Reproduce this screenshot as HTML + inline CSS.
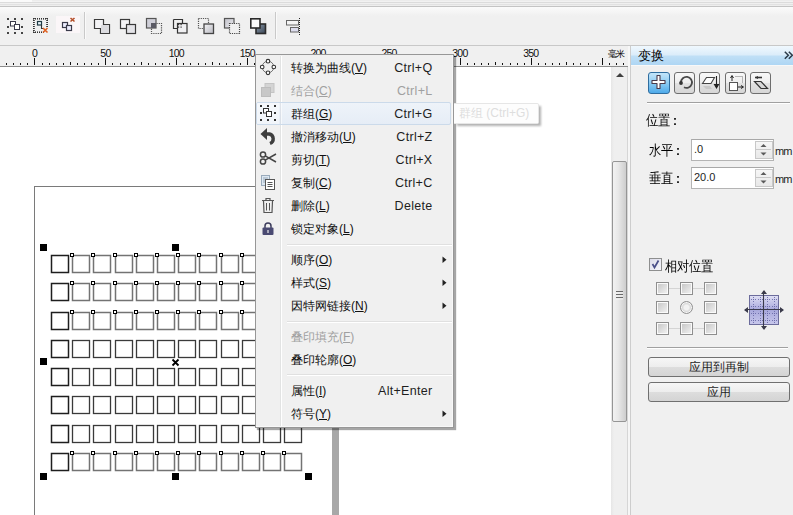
<!DOCTYPE html><html><head><meta charset="utf-8"><style>
*{margin:0;padding:0;box-sizing:border-box}
html,body{width:793px;height:515px;overflow:hidden;background:#fff;font-family:"Liberation Sans",sans-serif;color:#1e1e1e}
.a{position:absolute}
svg{position:absolute;overflow:visible}
.rl{position:absolute;font-size:10.5px;color:#111;top:48px;line-height:10px;width:30px;text-align:center;letter-spacing:-0.8px}
.mi{position:absolute;left:291px;font-size:12px;font-weight:500;line-height:14px;white-space:nowrap;color:#111}
.sc{position:absolute;font-size:12.5px;letter-spacing:0.3px;line-height:14px;white-space:nowrap;color:#1e1e1e}
.dis{color:#a0a0a0}
u{text-decoration:underline;text-underline-offset:1px}
.pt.cj{font-size:12px;letter-spacing:0;color:#000;transform:scaleY(1.14);transform-origin:0 0}
.pt .co{font-size:12px;margin-left:3px;font-weight:700;letter-spacing:0}
.pt{position:absolute;font-size:12px;font-weight:500;line-height:14px;white-space:nowrap;color:#1e1e1e}
</style></head><body><div class="a" style="left:0px;top:0px;width:793px;height:6px;background:linear-gradient(#ececec 0,#ececec 1px,#f2f2f2 1px,#f2f2f2 2px,#dcdcdc 2px,#dcdcdc 3px,#f0f0f0 3px,#f0f0f0 4px,#e2e2e2 4px,#e2e2e2 5px,#eeeeee 5px)"></div><div class="a" style="left:0px;top:0px;width:32px;height:2px;background:#fafafa"></div><div class="a" style="left:0px;top:6px;width:793px;height:1px;background:#c4c4c4"></div><div class="a" style="left:0px;top:7px;width:793px;height:38px;background:linear-gradient(#fbfbfb,#f0f0f0 9px,#f0f0f0)"></div><div class="a" style="left:0px;top:45px;width:793px;height:1px;background:#c8c8c8"></div><div class="a" style="left:84px;top:12px;width:1px;height:27px;background:#c9c9c9"></div><div class="a" style="left:85px;top:12px;width:1px;height:27px;background:#fafafa"></div><div class="a" style="left:275px;top:12px;width:1px;height:27px;background:#c9c9c9"></div><div class="a" style="left:276px;top:12px;width:1px;height:27px;background:#fafafa"></div><svg style="left:7px;top:18px" width="16" height="16" viewBox="0 0 16 16"><rect x="0" y="0" width="2" height="2" fill="#444"/><rect x="7" y="0" width="2" height="2" fill="#444"/><rect x="14" y="0" width="2" height="2" fill="#444"/><rect x="0" y="8" width="2" height="2" fill="#444"/><rect x="14" y="8" width="2" height="2" fill="#444"/><rect x="0" y="14" width="2" height="2" fill="#444"/><rect x="7" y="14" width="2" height="2" fill="#444"/><rect x="14" y="14" width="2" height="2" fill="#444"/><rect x="3.5" y="3.5" width="5" height="4.5" fill="#fff" stroke="#3a3a4a"/><rect x="7.5" y="6.5" width="5" height="5" fill="#fff" stroke="#3a3a4a"/></svg><svg style="left:33px;top:18px" width="16" height="16" viewBox="0 0 16 16"><rect x="0" y="0" width="1" height="1.6" fill="#333"/><rect x="2" y="0" width="1" height="1.6" fill="#333"/><rect x="4" y="0" width="1" height="1.6" fill="#333"/><rect x="6" y="0" width="1" height="1.6" fill="#333"/><rect x="8" y="0" width="1" height="1.6" fill="#333"/><rect x="10" y="0" width="1" height="1.6" fill="#333"/><rect x="12" y="0" width="1" height="1.6" fill="#333"/><rect x="14" y="0" width="1" height="1.6" fill="#333"/><rect x="0" y="13.4" width="1" height="1.6" fill="#333"/><rect x="2" y="13.4" width="1" height="1.6" fill="#333"/><rect x="4" y="13.4" width="1" height="1.6" fill="#333"/><rect x="6" y="13.4" width="1" height="1.6" fill="#333"/><rect x="8" y="13.4" width="1" height="1.6" fill="#333"/><rect x="10" y="13.4" width="1" height="1.6" fill="#333"/><rect x="0" y="0" width="1.8" height="1" fill="#333"/><rect x="0" y="2" width="1.8" height="1" fill="#333"/><rect x="0" y="4" width="1.8" height="1" fill="#333"/><rect x="0" y="6" width="1.8" height="1" fill="#333"/><rect x="0" y="8" width="1.8" height="1" fill="#333"/><rect x="0" y="10" width="1.8" height="1" fill="#333"/><rect x="0" y="12" width="1.8" height="1" fill="#333"/><rect x="0" y="14" width="1.8" height="1" fill="#333"/><rect x="13.2" y="0" width="1.8" height="1" fill="#333"/><rect x="13.2" y="2" width="1.8" height="1" fill="#333"/><rect x="13.2" y="4" width="1.8" height="1" fill="#333"/><rect x="13.2" y="6" width="1.8" height="1" fill="#333"/><rect x="13.2" y="8" width="1.8" height="1" fill="#333"/><rect x="4.5" y="3.5" width="4" height="3.5" fill="#e8f6fa" stroke="#1f3a44" stroke-width="1.2"/><path d="M8.5 7 V10.5 H11" stroke="#333" fill="none" stroke-width="1.1"/><path d="M10 10 L14.5 14.5 M14.5 10 L10 14.5" stroke="#e06020" stroke-width="1.6"/></svg><svg style="left:56px;top:16px" width="24" height="18" viewBox="0 0 24 18"><rect x="0" y="0" width="24" height="17" fill="#fbf6f8"/><rect x="6.5" y="6.5" width="5" height="5" fill="#eef" stroke="#3a3a4a" stroke-width="1.2"/><rect x="10.5" y="9.5" width="5" height="5" fill="#eef" stroke="#3a3a4a" stroke-width="1.2"/><path d="M14.5 2 L18.5 5.5 M18.5 2 L14.5 5.5" stroke="#b5502a" stroke-width="1.6"/></svg><svg style="left:94px;top:19px" width="17" height="15" viewBox="0 0 17 15"><path d="M0.5 0.5 H9.5 V5.5 H15.5 V14.5 H6.5 V9.5 H0.5 Z" fill="#f4f4f6" stroke="#3a3a3a" stroke-width="1.2"/><rect x="7" y="6" width="8" height="8" fill="#dcdce0"/></svg><svg style="left:120px;top:19px" width="17" height="15" viewBox="0 0 17 15"><rect x="0.5" y="0.5" width="9" height="9" fill="#f4f4f6" stroke="#3a3a3a" stroke-width="1.2"/><rect x="6.5" y="5.5" width="9" height="9" fill="#e4e4e8" stroke="#3a3a3a" stroke-width="1.2"/></svg><svg style="left:146px;top:18px" width="17" height="16" viewBox="0 0 17 16"><rect x="0.5" y="0.5" width="9.5" height="9.5" fill="#cfcfd8" stroke="#555" stroke-width="1.2"/><rect x="5" y="5" width="5" height="5" fill="#5a5a64"/><path d="M10.5 5.5 H15.5 V15.5 H5.5 V10.5" fill="none" stroke="#555" stroke-width="1.2" stroke-dasharray="1.2 1"/></svg><svg style="left:173px;top:19px" width="15" height="15" viewBox="0 0 15 15"><path d="M0.5 0.5 H9.5 V4" fill="none" stroke="#333" stroke-width="1.2"/><path d="M0.5 0.5 V9.5 H4" fill="none" stroke="#333" stroke-width="1.2"/><rect x="4.5" y="4.5" width="9.5" height="9.5" fill="#f0f0f2" stroke="#333" stroke-width="1.2"/><g fill="#333"><rect x="5" y="5" width="1.2" height="1.2"/><rect x="7.5" y="5" width="1.2" height="1.2"/><rect x="5" y="7.5" width="1.2" height="1.2"/><rect x="7.5" y="7.5" width="1.2" height="1.2"/></g></svg><svg style="left:198px;top:18px" width="17" height="16" viewBox="0 0 17 16"><path d="M0.5 0.5 H10.5 V5.5 M0.5 0.5 V10.5 H5.5" fill="none" stroke="#555" stroke-width="1.2" stroke-dasharray="1.2 1"/><defs><linearGradient id="g8" x1="0" y1="0" x2="1" y2="1"><stop offset="0" stop-color="#f4f4f6"/><stop offset="1" stop-color="#b8b8c0"/></linearGradient></defs><rect x="6" y="6" width="9.5" height="9.5" fill="url(#g8)" stroke="#444" stroke-width="1.3"/></svg><svg style="left:224px;top:18px" width="17" height="16" viewBox="0 0 17 16"><defs><linearGradient id="g9" x1="0" y1="0" x2="1" y2="1"><stop offset="0" stop-color="#c0c0c8"/><stop offset="1" stop-color="#eeeef2"/></linearGradient></defs><rect x="0.5" y="0.5" width="9.5" height="9.5" fill="url(#g9)" stroke="#555" stroke-width="1.2"/><rect x="5.5" y="5.5" width="10" height="10" fill="#f0f0f0" stroke="#444" stroke-width="1.2" stroke-dasharray="1.2 1"/></svg><svg style="left:250px;top:18px" width="17" height="16" viewBox="0 0 17 16"><defs><linearGradient id="g10" x1="0" y1="0" x2="1" y2="1"><stop offset="0" stop-color="#8a98a8"/><stop offset="1" stop-color="#3a4656"/></linearGradient></defs><rect x="6" y="6" width="9.5" height="9.5" fill="url(#g10)" stroke="#2a2a2a" stroke-width="1.6"/><rect x="0.8" y="0.8" width="9.2" height="9.2" fill="#fafafa" stroke="#2a2a2a" stroke-width="1.6"/></svg><svg style="left:286px;top:18px" width="15" height="17" viewBox="0 0 15 17"><rect x="0.5" y="2.5" width="12" height="4.5" fill="#f4f4f4" stroke="#666"/><rect x="4.5" y="9.5" width="8" height="4.5" fill="#dde" stroke="#666"/><path d="M13.5 0 V17" stroke="#222" stroke-dasharray="1 1"/></svg><div class="a" style="left:0px;top:46px;width:628px;height:20px;background:#f0f0f0"></div><div class="a" style="left:628px;top:46px;width:2px;height:21px;background:#f7f7f7"></div><div class="a" style="left:0px;top:66px;width:628px;height:1px;background:#8c8c8c"></div><svg style="left:0px;top:0px" width="630" height="67" viewBox="0 0 630 67"><rect x="6" y="63" width="1" height="2" fill="#111"/><rect x="13" y="63" width="1" height="2" fill="#111"/><rect x="20" y="63" width="1" height="2" fill="#111"/><rect x="27" y="63" width="1" height="2" fill="#111"/><rect x="34" y="58" width="1" height="7" fill="#111"/><rect x="42" y="63" width="1" height="2" fill="#111"/><rect x="49" y="63" width="1" height="2" fill="#111"/><rect x="56" y="63" width="1" height="2" fill="#111"/><rect x="63" y="63" width="1" height="2" fill="#111"/><rect x="70" y="62" width="1" height="3" fill="#111"/><rect x="77" y="63" width="1" height="2" fill="#111"/><rect x="84" y="63" width="1" height="2" fill="#111"/><rect x="91" y="63" width="1" height="2" fill="#111"/><rect x="98" y="63" width="1" height="2" fill="#111"/><rect x="105" y="58" width="1" height="7" fill="#111"/><rect x="112" y="63" width="1" height="2" fill="#111"/><rect x="120" y="63" width="1" height="2" fill="#111"/><rect x="127" y="63" width="1" height="2" fill="#111"/><rect x="134" y="63" width="1" height="2" fill="#111"/><rect x="141" y="62" width="1" height="3" fill="#111"/><rect x="148" y="63" width="1" height="2" fill="#111"/><rect x="155" y="63" width="1" height="2" fill="#111"/><rect x="162" y="63" width="1" height="2" fill="#111"/><rect x="169" y="63" width="1" height="2" fill="#111"/><rect x="176" y="58" width="1" height="7" fill="#111"/><rect x="183" y="63" width="1" height="2" fill="#111"/><rect x="190" y="63" width="1" height="2" fill="#111"/><rect x="198" y="63" width="1" height="2" fill="#111"/><rect x="205" y="63" width="1" height="2" fill="#111"/><rect x="212" y="62" width="1" height="3" fill="#111"/><rect x="219" y="63" width="1" height="2" fill="#111"/><rect x="226" y="63" width="1" height="2" fill="#111"/><rect x="233" y="63" width="1" height="2" fill="#111"/><rect x="240" y="63" width="1" height="2" fill="#111"/><rect x="247" y="58" width="1" height="7" fill="#111"/><rect x="254" y="63" width="1" height="2" fill="#111"/><rect x="261" y="63" width="1" height="2" fill="#111"/><rect x="268" y="63" width="1" height="2" fill="#111"/><rect x="276" y="63" width="1" height="2" fill="#111"/><rect x="283" y="62" width="1" height="3" fill="#111"/><rect x="290" y="63" width="1" height="2" fill="#111"/><rect x="297" y="63" width="1" height="2" fill="#111"/><rect x="304" y="63" width="1" height="2" fill="#111"/><rect x="311" y="63" width="1" height="2" fill="#111"/><rect x="318" y="58" width="1" height="7" fill="#111"/><rect x="325" y="63" width="1" height="2" fill="#111"/><rect x="332" y="63" width="1" height="2" fill="#111"/><rect x="339" y="63" width="1" height="2" fill="#111"/><rect x="346" y="63" width="1" height="2" fill="#111"/><rect x="354" y="62" width="1" height="3" fill="#111"/><rect x="361" y="63" width="1" height="2" fill="#111"/><rect x="368" y="63" width="1" height="2" fill="#111"/><rect x="375" y="63" width="1" height="2" fill="#111"/><rect x="382" y="63" width="1" height="2" fill="#111"/><rect x="389" y="58" width="1" height="7" fill="#111"/><rect x="396" y="63" width="1" height="2" fill="#111"/><rect x="403" y="63" width="1" height="2" fill="#111"/><rect x="410" y="63" width="1" height="2" fill="#111"/><rect x="417" y="63" width="1" height="2" fill="#111"/><rect x="424" y="62" width="1" height="3" fill="#111"/><rect x="432" y="63" width="1" height="2" fill="#111"/><rect x="439" y="63" width="1" height="2" fill="#111"/><rect x="446" y="63" width="1" height="2" fill="#111"/><rect x="453" y="63" width="1" height="2" fill="#111"/><rect x="460" y="58" width="1" height="7" fill="#111"/><rect x="467" y="63" width="1" height="2" fill="#111"/><rect x="474" y="63" width="1" height="2" fill="#111"/><rect x="481" y="63" width="1" height="2" fill="#111"/><rect x="488" y="63" width="1" height="2" fill="#111"/><rect x="495" y="62" width="1" height="3" fill="#111"/><rect x="502" y="63" width="1" height="2" fill="#111"/><rect x="510" y="63" width="1" height="2" fill="#111"/><rect x="517" y="63" width="1" height="2" fill="#111"/><rect x="524" y="63" width="1" height="2" fill="#111"/><rect x="531" y="58" width="1" height="7" fill="#111"/><rect x="538" y="63" width="1" height="2" fill="#111"/><rect x="545" y="63" width="1" height="2" fill="#111"/><rect x="552" y="63" width="1" height="2" fill="#111"/><rect x="559" y="63" width="1" height="2" fill="#111"/><rect x="566" y="62" width="1" height="3" fill="#111"/><rect x="573" y="63" width="1" height="2" fill="#111"/><rect x="580" y="63" width="1" height="2" fill="#111"/><rect x="588" y="63" width="1" height="2" fill="#111"/><rect x="595" y="63" width="1" height="2" fill="#111"/><rect x="602" y="58" width="1" height="7" fill="#111"/><rect x="609" y="63" width="1" height="2" fill="#111"/><rect x="616" y="63" width="1" height="2" fill="#111"/><rect x="623" y="63" width="1" height="2" fill="#111"/></svg><div class="rl" style="left:19.5px">0</div><div class="rl" style="left:90.4px">50</div><div class="rl" style="left:161.3px">100</div><div class="rl" style="left:232.2px">150</div><div class="rl" style="left:303.1px">200</div><div class="rl" style="left:374.0px">250</div><div class="rl" style="left:444.9px">300</div><div class="rl" style="left:515.8px">350</div><div class="rl" style="left:608px;width:18px;text-align:left;font-size:9px;top:49px;font-weight:500;color:#000">毫米</div><div class="a" style="left:0px;top:67px;width:611px;height:448px;background:#fff"></div><div class="a" style="left:34px;top:186px;width:299px;height:329px;border-left:1px solid #7a7a7a;border-top:1px solid #7a7a7a"></div><div class="a" style="left:332px;top:192px;width:7px;height:323px;background:#a8a8a8"></div><svg style="left:0px;top:0px" width="611" height="515" viewBox="0 0 611 515"><rect x="51.5" y="255.5" width="17" height="17" fill="none" stroke="#1e1e1e" stroke-width="1.5"/><rect x="72.5" y="255.5" width="17" height="17" fill="none" stroke="#737373" stroke-width="1.5"/><rect x="70.5" y="253.5" width="3" height="3" fill="#fff" stroke="#000" stroke-width="1"/><rect x="93.5" y="255.5" width="17" height="17" fill="none" stroke="#737373" stroke-width="1.5"/><rect x="91.5" y="253.5" width="3" height="3" fill="#fff" stroke="#000" stroke-width="1"/><rect x="115.5" y="255.5" width="17" height="17" fill="none" stroke="#737373" stroke-width="1.5"/><rect x="113.5" y="253.5" width="3" height="3" fill="#fff" stroke="#000" stroke-width="1"/><rect x="136.5" y="255.5" width="17" height="17" fill="none" stroke="#737373" stroke-width="1.5"/><rect x="134.5" y="253.5" width="3" height="3" fill="#fff" stroke="#000" stroke-width="1"/><rect x="157.5" y="255.5" width="17" height="17" fill="none" stroke="#737373" stroke-width="1.5"/><rect x="155.5" y="253.5" width="3" height="3" fill="#fff" stroke="#000" stroke-width="1"/><rect x="178.5" y="255.5" width="17" height="17" fill="none" stroke="#737373" stroke-width="1.5"/><rect x="176.5" y="253.5" width="3" height="3" fill="#fff" stroke="#000" stroke-width="1"/><rect x="199.5" y="255.5" width="17" height="17" fill="none" stroke="#737373" stroke-width="1.5"/><rect x="197.5" y="253.5" width="3" height="3" fill="#fff" stroke="#000" stroke-width="1"/><rect x="221.5" y="255.5" width="17" height="17" fill="none" stroke="#737373" stroke-width="1.5"/><rect x="219.5" y="253.5" width="3" height="3" fill="#fff" stroke="#000" stroke-width="1"/><rect x="242.5" y="255.5" width="17" height="17" fill="none" stroke="#737373" stroke-width="1.5"/><rect x="240.5" y="253.5" width="3" height="3" fill="#fff" stroke="#000" stroke-width="1"/><rect x="263.5" y="255.5" width="17" height="17" fill="none" stroke="#737373" stroke-width="1.5"/><rect x="261.5" y="253.5" width="3" height="3" fill="#fff" stroke="#000" stroke-width="1"/><rect x="284.5" y="255.5" width="17" height="17" fill="none" stroke="#737373" stroke-width="1.5"/><rect x="282.5" y="253.5" width="3" height="3" fill="#fff" stroke="#000" stroke-width="1"/><rect x="51.5" y="283.5" width="17" height="17" fill="none" stroke="#1e1e1e" stroke-width="1.5"/><rect x="72.5" y="283.5" width="17" height="17" fill="none" stroke="#737373" stroke-width="1.5"/><rect x="70.5" y="281.5" width="3" height="3" fill="#fff" stroke="#000" stroke-width="1"/><rect x="93.5" y="283.5" width="17" height="17" fill="none" stroke="#737373" stroke-width="1.5"/><rect x="91.5" y="281.5" width="3" height="3" fill="#fff" stroke="#000" stroke-width="1"/><rect x="115.5" y="283.5" width="17" height="17" fill="none" stroke="#737373" stroke-width="1.5"/><rect x="113.5" y="281.5" width="3" height="3" fill="#fff" stroke="#000" stroke-width="1"/><rect x="136.5" y="283.5" width="17" height="17" fill="none" stroke="#737373" stroke-width="1.5"/><rect x="134.5" y="281.5" width="3" height="3" fill="#fff" stroke="#000" stroke-width="1"/><rect x="157.5" y="283.5" width="17" height="17" fill="none" stroke="#737373" stroke-width="1.5"/><rect x="155.5" y="281.5" width="3" height="3" fill="#fff" stroke="#000" stroke-width="1"/><rect x="178.5" y="283.5" width="17" height="17" fill="none" stroke="#737373" stroke-width="1.5"/><rect x="176.5" y="281.5" width="3" height="3" fill="#fff" stroke="#000" stroke-width="1"/><rect x="199.5" y="283.5" width="17" height="17" fill="none" stroke="#737373" stroke-width="1.5"/><rect x="197.5" y="281.5" width="3" height="3" fill="#fff" stroke="#000" stroke-width="1"/><rect x="221.5" y="283.5" width="17" height="17" fill="none" stroke="#737373" stroke-width="1.5"/><rect x="219.5" y="281.5" width="3" height="3" fill="#fff" stroke="#000" stroke-width="1"/><rect x="242.5" y="283.5" width="17" height="17" fill="none" stroke="#737373" stroke-width="1.5"/><rect x="240.5" y="281.5" width="3" height="3" fill="#fff" stroke="#000" stroke-width="1"/><rect x="263.5" y="283.5" width="17" height="17" fill="none" stroke="#737373" stroke-width="1.5"/><rect x="261.5" y="281.5" width="3" height="3" fill="#fff" stroke="#000" stroke-width="1"/><rect x="284.5" y="283.5" width="17" height="17" fill="none" stroke="#737373" stroke-width="1.5"/><rect x="282.5" y="281.5" width="3" height="3" fill="#fff" stroke="#000" stroke-width="1"/><rect x="51.5" y="312.5" width="17" height="17" fill="none" stroke="#1e1e1e" stroke-width="1.5"/><rect x="72.5" y="312.5" width="17" height="17" fill="none" stroke="#737373" stroke-width="1.5"/><rect x="70.5" y="310.5" width="3" height="3" fill="#fff" stroke="#000" stroke-width="1"/><rect x="93.5" y="312.5" width="17" height="17" fill="none" stroke="#737373" stroke-width="1.5"/><rect x="91.5" y="310.5" width="3" height="3" fill="#fff" stroke="#000" stroke-width="1"/><rect x="115.5" y="312.5" width="17" height="17" fill="none" stroke="#737373" stroke-width="1.5"/><rect x="113.5" y="310.5" width="3" height="3" fill="#fff" stroke="#000" stroke-width="1"/><rect x="136.5" y="312.5" width="17" height="17" fill="none" stroke="#737373" stroke-width="1.5"/><rect x="134.5" y="310.5" width="3" height="3" fill="#fff" stroke="#000" stroke-width="1"/><rect x="157.5" y="312.5" width="17" height="17" fill="none" stroke="#737373" stroke-width="1.5"/><rect x="155.5" y="310.5" width="3" height="3" fill="#fff" stroke="#000" stroke-width="1"/><rect x="178.5" y="312.5" width="17" height="17" fill="none" stroke="#737373" stroke-width="1.5"/><rect x="176.5" y="310.5" width="3" height="3" fill="#fff" stroke="#000" stroke-width="1"/><rect x="199.5" y="312.5" width="17" height="17" fill="none" stroke="#737373" stroke-width="1.5"/><rect x="197.5" y="310.5" width="3" height="3" fill="#fff" stroke="#000" stroke-width="1"/><rect x="221.5" y="312.5" width="17" height="17" fill="none" stroke="#737373" stroke-width="1.5"/><rect x="219.5" y="310.5" width="3" height="3" fill="#fff" stroke="#000" stroke-width="1"/><rect x="242.5" y="312.5" width="17" height="17" fill="none" stroke="#737373" stroke-width="1.5"/><rect x="240.5" y="310.5" width="3" height="3" fill="#fff" stroke="#000" stroke-width="1"/><rect x="263.5" y="312.5" width="17" height="17" fill="none" stroke="#737373" stroke-width="1.5"/><rect x="261.5" y="310.5" width="3" height="3" fill="#fff" stroke="#000" stroke-width="1"/><rect x="284.5" y="312.5" width="17" height="17" fill="none" stroke="#737373" stroke-width="1.5"/><rect x="282.5" y="310.5" width="3" height="3" fill="#fff" stroke="#000" stroke-width="1"/><rect x="51.5" y="340.5" width="17" height="17" fill="none" stroke="#1e1e1e" stroke-width="1.5"/><rect x="72.5" y="340.5" width="17" height="17" fill="none" stroke="#3a3a3a" stroke-width="1.3"/><rect x="93.5" y="340.5" width="17" height="17" fill="none" stroke="#3a3a3a" stroke-width="1.3"/><rect x="115.5" y="340.5" width="17" height="17" fill="none" stroke="#3a3a3a" stroke-width="1.3"/><rect x="136.5" y="340.5" width="17" height="17" fill="none" stroke="#3a3a3a" stroke-width="1.3"/><rect x="157.5" y="340.5" width="17" height="17" fill="none" stroke="#3a3a3a" stroke-width="1.3"/><rect x="178.5" y="340.5" width="17" height="17" fill="none" stroke="#3a3a3a" stroke-width="1.3"/><rect x="199.5" y="340.5" width="17" height="17" fill="none" stroke="#3a3a3a" stroke-width="1.3"/><rect x="221.5" y="340.5" width="17" height="17" fill="none" stroke="#3a3a3a" stroke-width="1.3"/><rect x="242.5" y="340.5" width="17" height="17" fill="none" stroke="#3a3a3a" stroke-width="1.3"/><rect x="263.5" y="340.5" width="17" height="17" fill="none" stroke="#3a3a3a" stroke-width="1.3"/><rect x="284.5" y="340.5" width="17" height="17" fill="none" stroke="#3a3a3a" stroke-width="1.3"/><rect x="51.5" y="368.5" width="17" height="17" fill="none" stroke="#1e1e1e" stroke-width="1.5"/><rect x="72.5" y="368.5" width="17" height="17" fill="none" stroke="#3a3a3a" stroke-width="1.3"/><rect x="93.5" y="368.5" width="17" height="17" fill="none" stroke="#3a3a3a" stroke-width="1.3"/><rect x="115.5" y="368.5" width="17" height="17" fill="none" stroke="#3a3a3a" stroke-width="1.3"/><rect x="136.5" y="368.5" width="17" height="17" fill="none" stroke="#3a3a3a" stroke-width="1.3"/><rect x="157.5" y="368.5" width="17" height="17" fill="none" stroke="#3a3a3a" stroke-width="1.3"/><rect x="178.5" y="368.5" width="17" height="17" fill="none" stroke="#3a3a3a" stroke-width="1.3"/><rect x="199.5" y="368.5" width="17" height="17" fill="none" stroke="#3a3a3a" stroke-width="1.3"/><rect x="221.5" y="368.5" width="17" height="17" fill="none" stroke="#3a3a3a" stroke-width="1.3"/><rect x="242.5" y="368.5" width="17" height="17" fill="none" stroke="#3a3a3a" stroke-width="1.3"/><rect x="263.5" y="368.5" width="17" height="17" fill="none" stroke="#3a3a3a" stroke-width="1.3"/><rect x="284.5" y="368.5" width="17" height="17" fill="none" stroke="#3a3a3a" stroke-width="1.3"/><rect x="51.5" y="396.5" width="17" height="17" fill="none" stroke="#1e1e1e" stroke-width="1.5"/><rect x="72.5" y="396.5" width="17" height="17" fill="none" stroke="#3a3a3a" stroke-width="1.3"/><rect x="93.5" y="396.5" width="17" height="17" fill="none" stroke="#3a3a3a" stroke-width="1.3"/><rect x="115.5" y="396.5" width="17" height="17" fill="none" stroke="#3a3a3a" stroke-width="1.3"/><rect x="136.5" y="396.5" width="17" height="17" fill="none" stroke="#3a3a3a" stroke-width="1.3"/><rect x="157.5" y="396.5" width="17" height="17" fill="none" stroke="#3a3a3a" stroke-width="1.3"/><rect x="178.5" y="396.5" width="17" height="17" fill="none" stroke="#3a3a3a" stroke-width="1.3"/><rect x="199.5" y="396.5" width="17" height="17" fill="none" stroke="#3a3a3a" stroke-width="1.3"/><rect x="221.5" y="396.5" width="17" height="17" fill="none" stroke="#3a3a3a" stroke-width="1.3"/><rect x="242.5" y="396.5" width="17" height="17" fill="none" stroke="#3a3a3a" stroke-width="1.3"/><rect x="263.5" y="396.5" width="17" height="17" fill="none" stroke="#3a3a3a" stroke-width="1.3"/><rect x="284.5" y="396.5" width="17" height="17" fill="none" stroke="#3a3a3a" stroke-width="1.3"/><rect x="51.5" y="425.5" width="17" height="17" fill="none" stroke="#1e1e1e" stroke-width="1.5"/><rect x="72.5" y="425.5" width="17" height="17" fill="none" stroke="#3a3a3a" stroke-width="1.3"/><rect x="93.5" y="425.5" width="17" height="17" fill="none" stroke="#3a3a3a" stroke-width="1.3"/><rect x="115.5" y="425.5" width="17" height="17" fill="none" stroke="#3a3a3a" stroke-width="1.3"/><rect x="136.5" y="425.5" width="17" height="17" fill="none" stroke="#3a3a3a" stroke-width="1.3"/><rect x="157.5" y="425.5" width="17" height="17" fill="none" stroke="#3a3a3a" stroke-width="1.3"/><rect x="178.5" y="425.5" width="17" height="17" fill="none" stroke="#3a3a3a" stroke-width="1.3"/><rect x="199.5" y="425.5" width="17" height="17" fill="none" stroke="#3a3a3a" stroke-width="1.3"/><rect x="221.5" y="425.5" width="17" height="17" fill="none" stroke="#3a3a3a" stroke-width="1.3"/><rect x="242.5" y="425.5" width="17" height="17" fill="none" stroke="#3a3a3a" stroke-width="1.3"/><rect x="263.5" y="425.5" width="17" height="17" fill="none" stroke="#3a3a3a" stroke-width="1.3"/><rect x="284.5" y="425.5" width="17" height="17" fill="none" stroke="#3a3a3a" stroke-width="1.3"/><rect x="51.5" y="453.5" width="17" height="17" fill="none" stroke="#1e1e1e" stroke-width="1.5"/><rect x="72.5" y="453.5" width="17" height="17" fill="none" stroke="#737373" stroke-width="1.5"/><rect x="70.5" y="451.5" width="3" height="3" fill="#fff" stroke="#000" stroke-width="1"/><rect x="93.5" y="453.5" width="17" height="17" fill="none" stroke="#737373" stroke-width="1.5"/><rect x="91.5" y="451.5" width="3" height="3" fill="#fff" stroke="#000" stroke-width="1"/><rect x="115.5" y="453.5" width="17" height="17" fill="none" stroke="#737373" stroke-width="1.5"/><rect x="113.5" y="451.5" width="3" height="3" fill="#fff" stroke="#000" stroke-width="1"/><rect x="136.5" y="453.5" width="17" height="17" fill="none" stroke="#737373" stroke-width="1.5"/><rect x="134.5" y="451.5" width="3" height="3" fill="#fff" stroke="#000" stroke-width="1"/><rect x="157.5" y="453.5" width="17" height="17" fill="none" stroke="#737373" stroke-width="1.5"/><rect x="155.5" y="451.5" width="3" height="3" fill="#fff" stroke="#000" stroke-width="1"/><rect x="178.5" y="453.5" width="17" height="17" fill="none" stroke="#737373" stroke-width="1.5"/><rect x="176.5" y="451.5" width="3" height="3" fill="#fff" stroke="#000" stroke-width="1"/><rect x="199.5" y="453.5" width="17" height="17" fill="none" stroke="#737373" stroke-width="1.5"/><rect x="197.5" y="451.5" width="3" height="3" fill="#fff" stroke="#000" stroke-width="1"/><rect x="221.5" y="453.5" width="17" height="17" fill="none" stroke="#737373" stroke-width="1.5"/><rect x="219.5" y="451.5" width="3" height="3" fill="#fff" stroke="#000" stroke-width="1"/><rect x="242.5" y="453.5" width="17" height="17" fill="none" stroke="#737373" stroke-width="1.5"/><rect x="240.5" y="451.5" width="3" height="3" fill="#fff" stroke="#000" stroke-width="1"/><rect x="263.5" y="453.5" width="17" height="17" fill="none" stroke="#737373" stroke-width="1.5"/><rect x="261.5" y="451.5" width="3" height="3" fill="#fff" stroke="#000" stroke-width="1"/><rect x="284.5" y="453.5" width="17" height="17" fill="none" stroke="#737373" stroke-width="1.5"/><rect x="282.5" y="451.5" width="3" height="3" fill="#fff" stroke="#000" stroke-width="1"/><rect x="40" y="244" width="7" height="7" fill="#000"/><rect x="172" y="244" width="7" height="7" fill="#000"/><rect x="305" y="244" width="7" height="7" fill="#000"/><rect x="40" y="358" width="7" height="7" fill="#000"/><rect x="305" y="358" width="7" height="7" fill="#000"/><rect x="40" y="473" width="7" height="7" fill="#000"/><rect x="172" y="473" width="7" height="7" fill="#000"/><rect x="305" y="473" width="7" height="7" fill="#000"/><path d="M172.5 359.5 L178.5 365.5 M178.5 359.5 L172.5 365.5" stroke="#000" stroke-width="1.8"/></svg><div class="a" style="left:611px;top:67px;width:19px;height:448px;background:linear-gradient(90deg,#e6e6e6,#efefef 3px,#efefef)"></div><div class="a" style="left:627px;top:67px;width:1px;height:448px;background:#d6d6d6"></div><div class="a" style="left:628px;top:67px;width:2px;height:448px;background:#f6f6f6"></div><svg style="left:615px;top:72px" width="10" height="6" viewBox="0 0 10 6"><path d="M1 5 L5 1 L9 5 Z" fill="#404040"/></svg><div class="a" style="left:612px;top:161px;width:15px;height:261px;border:1px solid #959595;border-radius:2px;background:linear-gradient(90deg,#f2f2f2,#e8e8e8 40%,#cdcdcd)"></div><svg style="left:616px;top:291px" width="8" height="9" viewBox="0 0 8 9"><g fill="#6a6a6a"><rect x="0" y="0" width="7" height="1.3"/><rect x="0" y="3" width="7" height="1.3"/><rect x="0" y="6" width="7" height="1.3"/></g><g fill="#fff"><rect x="0" y="1.3" width="7" height="1"/><rect x="0" y="4.3" width="7" height="1"/><rect x="0" y="7.3" width="7" height="1"/></g></svg><div class="a" style="left:630px;top:46px;width:1px;height:469px;background:#cdcdcd"></div><div class="a" style="left:631px;top:46px;width:162px;height:469px;background:#f0f0f0"></div><div class="a" style="left:631px;top:46px;width:162px;height:19px;background:linear-gradient(#f0f8fe,#dcedfa 45%,#bfdff6 55%,#aed6f4)"></div><div class="a" style="left:631px;top:65px;width:162px;height:1px;background:#f8f8f8"></div><div class="pt" style="left:638px;top:49px;font-size:12.5px;font-weight:500;color:#000">变换</div><svg style="left:784px;top:51px" width="10" height="9" viewBox="0 0 10 9"><path d="M0.8 0.8 L4.3 4.3 L0.8 7.8 M4.8 0.8 L8.3 4.3 L4.8 7.8" fill="none" stroke="#2a3a48" stroke-width="1.5"/></svg><div class="a" style="left:648px;top:72px;width:22px;height:22px;border:1px solid #2f6d9f;border-radius:3px;background:linear-gradient(#c4e6fa,#8ccbf2 50%,#4eaaea)"></div><svg style="left:648px;top:72px" width="22" height="22" viewBox="0 0 22 22"><path d="M9 3.5 H12 V8.5 H17 V11.5 H12 V16.5 H9 V11.5 H4 V8.5 H9 Z" fill="#fff" stroke="#4a3a4a" stroke-width="1.1" stroke-linejoin="round"/></svg><div class="a" style="left:674px;top:72px;width:21px;height:22px;border:1px solid #6e6e6e;border-radius:3px;background:linear-gradient(#f8f8f8,#eeeeee 50%,#e2e2e2 51%,#d6d6d6)"></div><svg style="left:674px;top:72px" width="22" height="22" viewBox="0 0 22 22"><path d="M7 10.5 A5.5 5.5 0 1 1 10 15.3" fill="none" stroke="#4a4a4a" stroke-width="1.8"/><circle cx="7" cy="11" r="1.9" fill="#333"/></svg><div class="a" style="left:699px;top:72px;width:21px;height:22px;border:1px solid #6e6e6e;border-radius:3px;background:linear-gradient(#f8f8f8,#eeeeee 50%,#e2e2e2 51%,#d6d6d6)"></div><svg style="left:699px;top:72px" width="22" height="22" viewBox="0 0 22 22"><path d="M4 14 L7 17 H13 L11 14 Z" fill="#c8c8c8"/><path d="M3.5 11.5 L7.5 5.5 H15.5 L12 11.5 Z" fill="#fff" stroke="#444" stroke-width="1.1"/><path d="M17.5 4 V15 M15.5 12.5 L17.5 16 L19.5 12.5 Z" fill="#222" stroke="#222" stroke-width="1.1"/></svg><div class="a" style="left:725px;top:72px;width:21px;height:22px;border:1px solid #6e6e6e;border-radius:3px;background:linear-gradient(#f8f8f8,#eeeeee 50%,#e2e2e2 51%,#d6d6d6)"></div><svg style="left:725px;top:72px" width="22" height="22" viewBox="0 0 22 22"><path d="M10.5 4.5 H17.5 V11" fill="none" stroke="#777" stroke-dasharray="1 1"/><rect x="4.5" y="10.5" width="8" height="8" fill="#fff" stroke="#555"/><path d="M7 9 V4 M5.5 6 L7 3.5 L8.5 6 M13 15 H18 M16 13.5 L18.5 15 L16 16.5" fill="none" stroke="#222"/></svg><div class="a" style="left:750px;top:72px;width:21px;height:22px;border:1px solid #6e6e6e;border-radius:3px;background:linear-gradient(#f8f8f8,#eeeeee 50%,#e2e2e2 51%,#d6d6d6)"></div><svg style="left:750px;top:72px" width="22" height="22" viewBox="0 0 22 22"><path d="M5 5.5 H12" stroke="#333" stroke-width="1.6"/><path d="M8 4 L5 5.5 L8 7" fill="#333"/><path d="M4.5 9.5 H11 L17.5 16.5 H11 Z" fill="#d8d8d8" stroke="#333" stroke-width="1.2"/></svg><div class="a" style="left:647px;top:102px;width:143px;height:1px;background:#a0a0a0"></div><div class="a" style="left:647px;top:103px;width:143px;height:1px;background:#fff"></div><div class="pt cj" style="left:646px;top:112px">位置<span class="co">:</span></div><div class="pt cj" style="left:649px;top:141.5px">水平<span class="co">:</span></div><div class="pt cj" style="left:649px;top:169.5px">垂直<span class="co">:</span></div><div class="a" style="left:691px;top:139px;width:83px;height:22px;border:1px solid #b4b4b4;border-top-color:#a8a8a8;background:#fff"></div><div class="pt" style="left:694px;top:142px;font-size:11px;font-weight:400">.0</div><div class="a" style="left:755px;top:141px;width:18px;height:18px;border:1px solid #c8c8c8;background:linear-gradient(#f6f6f6,#e8e8e8)"></div><div class="a" style="left:756px;top:149px;width:15px;height:1px;background:#c8c8c8"></div><svg style="left:760px;top:143px" width="8" height="14" viewBox="0 0 8 14"><path d="M0.5 4 L3.5 1 L6.5 4 Z" fill="#5a5a5a"/><path d="M0.5 9.5 L3.5 12.5 L6.5 9.5 Z" fill="#5a5a5a"/></svg><div class="pt" style="left:775px;top:144px;font-size:11px;letter-spacing:-0.9px;font-weight:400">mm</div><div class="a" style="left:691px;top:167px;width:83px;height:22px;border:1px solid #b4b4b4;border-top-color:#a8a8a8;background:#fff"></div><div class="pt" style="left:694px;top:170px;font-size:11px;font-weight:400">20.0</div><div class="a" style="left:755px;top:169px;width:18px;height:18px;border:1px solid #c8c8c8;background:linear-gradient(#f6f6f6,#e8e8e8)"></div><div class="a" style="left:756px;top:177px;width:15px;height:1px;background:#c8c8c8"></div><svg style="left:760px;top:171px" width="8" height="14" viewBox="0 0 8 14"><path d="M0.5 4 L3.5 1 L6.5 4 Z" fill="#5a5a5a"/><path d="M0.5 9.5 L3.5 12.5 L6.5 9.5 Z" fill="#5a5a5a"/></svg><div class="pt" style="left:775px;top:172px;font-size:11px;letter-spacing:-0.9px;font-weight:400">mm</div><div class="a" style="left:649px;top:258px;width:13px;height:13px;border:1px solid #8e8f8f;background:linear-gradient(135deg,#dcdcea,#f6f6fb)"></div><svg style="left:650px;top:259px" width="11" height="11" viewBox="0 0 11 11"><path d="M2.5 5 L4.5 8.5 L8.5 1.5" fill="none" stroke="#4a4f8a" stroke-width="1.7"/></svg><div class="pt cj" style="left:665px;top:257.5px">相对位置</div><svg style="left:0px;top:0px" width="793" height="515" viewBox="0 0 793 515"><path d="M669 288.5 H680 M693 288.5 H704 M669 328.5 H680 M693 328.5 H704" stroke="#d4d4d4"/></svg><div class="a" style="left:656px;top:282px;width:13px;height:13px;border:1px solid #8e8e8e;background:linear-gradient(135deg,#c4c4c4,#f4f4f4);box-shadow:inset 0 0 0 1px #fafafa"></div><div class="a" style="left:680px;top:282px;width:13px;height:13px;border:1px solid #8e8e8e;background:linear-gradient(135deg,#c4c4c4,#f4f4f4);box-shadow:inset 0 0 0 1px #fafafa"></div><div class="a" style="left:704px;top:282px;width:13px;height:13px;border:1px solid #8e8e8e;background:linear-gradient(135deg,#c4c4c4,#f4f4f4);box-shadow:inset 0 0 0 1px #fafafa"></div><div class="a" style="left:656px;top:301px;width:13px;height:13px;border:1px solid #8e8e8e;background:linear-gradient(135deg,#c4c4c4,#f4f4f4);box-shadow:inset 0 0 0 1px #fafafa"></div><div class="a" style="left:680px;top:301px;width:13px;height:13px;border:1px solid #909090;border-radius:50%;background:radial-gradient(#f2f2f2 30%,#d0d0d0 60%,#e8e8e8);box-shadow:inset 0 0 0 1px #f6f6f6"></div><div class="a" style="left:704px;top:301px;width:13px;height:13px;border:1px solid #8e8e8e;background:linear-gradient(135deg,#c4c4c4,#f4f4f4);box-shadow:inset 0 0 0 1px #fafafa"></div><div class="a" style="left:656px;top:322px;width:13px;height:13px;border:1px solid #8e8e8e;background:linear-gradient(135deg,#c4c4c4,#f4f4f4);box-shadow:inset 0 0 0 1px #fafafa"></div><div class="a" style="left:680px;top:322px;width:13px;height:13px;border:1px solid #8e8e8e;background:linear-gradient(135deg,#c4c4c4,#f4f4f4);box-shadow:inset 0 0 0 1px #fafafa"></div><div class="a" style="left:704px;top:322px;width:13px;height:13px;border:1px solid #8e8e8e;background:linear-gradient(135deg,#c4c4c4,#f4f4f4);box-shadow:inset 0 0 0 1px #fafafa"></div><svg style="left:744px;top:290px" width="40" height="40" viewBox="0 0 40 40"><defs><linearGradient id="pg" x1="0" y1="0" x2="0" y2="1"><stop offset="0" stop-color="#e0e0f4"/><stop offset="0.5" stop-color="#a8a8dc"/><stop offset="1" stop-color="#c8c8ec"/></linearGradient></defs><rect x="5.5" y="5.5" width="29" height="29" fill="url(#pg)" stroke="#6c6c9c"/><path d="M7.0 9.5 h5 M9.5 7.0 v5" stroke="#6a6aa8" stroke-width="0.9" stroke-dasharray="1 1"/><path d="M7.0 16.5 h5 M9.5 14.0 v5" stroke="#6a6aa8" stroke-width="0.9" stroke-dasharray="1 1"/><path d="M7.0 23.5 h5 M9.5 21.0 v5" stroke="#6a6aa8" stroke-width="0.9" stroke-dasharray="1 1"/><path d="M7.0 30.5 h5 M9.5 28.0 v5" stroke="#6a6aa8" stroke-width="0.9" stroke-dasharray="1 1"/><path d="M14.0 9.5 h5 M16.5 7.0 v5" stroke="#6a6aa8" stroke-width="0.9" stroke-dasharray="1 1"/><path d="M14.0 16.5 h5 M16.5 14.0 v5" stroke="#6a6aa8" stroke-width="0.9" stroke-dasharray="1 1"/><path d="M14.0 23.5 h5 M16.5 21.0 v5" stroke="#6a6aa8" stroke-width="0.9" stroke-dasharray="1 1"/><path d="M14.0 30.5 h5 M16.5 28.0 v5" stroke="#6a6aa8" stroke-width="0.9" stroke-dasharray="1 1"/><path d="M21.0 9.5 h5 M23.5 7.0 v5" stroke="#6a6aa8" stroke-width="0.9" stroke-dasharray="1 1"/><path d="M21.0 16.5 h5 M23.5 14.0 v5" stroke="#6a6aa8" stroke-width="0.9" stroke-dasharray="1 1"/><path d="M21.0 23.5 h5 M23.5 21.0 v5" stroke="#6a6aa8" stroke-width="0.9" stroke-dasharray="1 1"/><path d="M21.0 30.5 h5 M23.5 28.0 v5" stroke="#6a6aa8" stroke-width="0.9" stroke-dasharray="1 1"/><path d="M28.0 9.5 h5 M30.5 7.0 v5" stroke="#6a6aa8" stroke-width="0.9" stroke-dasharray="1 1"/><path d="M28.0 16.5 h5 M30.5 14.0 v5" stroke="#6a6aa8" stroke-width="0.9" stroke-dasharray="1 1"/><path d="M28.0 23.5 h5 M30.5 21.0 v5" stroke="#6a6aa8" stroke-width="0.9" stroke-dasharray="1 1"/><path d="M28.0 30.5 h5 M30.5 28.0 v5" stroke="#6a6aa8" stroke-width="0.9" stroke-dasharray="1 1"/><path d="M19.5 1 V39 M1 19.5 H39" stroke="#3a3a4a" stroke-width="1.1"/><path d="M17 4 L20 0 L23 4 Z M17 36 L20 40 L23 36 Z M4 17 L0 20 L4 23 Z M36 17 L40 20 L36 23 Z" fill="#3a3a4a"/></svg><div class="a" style="left:647px;top:347px;width:141px;height:1px;background:#a0a0a0"></div><div class="a" style="left:647px;top:348px;width:141px;height:1px;background:#fff"></div><div class="a" style="left:648px;top:357px;width:142px;height:20px;border:1px solid #707070;border-radius:3px;background:linear-gradient(#f6f6f6,#ededed 50%,#dddddd 51%,#d4d4d4)"></div><div class="pt" style="left:648px;width:142px;text-align:center;top:360px">应用到再制</div><div class="a" style="left:648px;top:382px;width:142px;height:20px;border:1px solid #707070;border-radius:3px;background:linear-gradient(#f6f6f6,#ededed 50%,#dddddd 51%,#d4d4d4)"></div><div class="pt" style="left:648px;width:142px;text-align:center;top:385px">应用</div><div class="a" style="left:255px;top:54px;width:199px;height:374px;border:1px solid #979797;background:#f0f0f0;box-shadow:2px 2px 1px rgba(0,0,0,0.35)"></div><div class="a" style="left:256px;top:55px;width:197px;height:372px;border-right:1px solid #f8f8f8;border-bottom:1px solid #f8f8f8"></div><div class="a" style="left:280px;top:56px;width:1px;height:370px;background:#e2e3e3"></div><div class="a" style="left:281px;top:56px;width:1px;height:370px;background:#ffffff"></div><div class="a" style="left:256px;top:102px;width:195px;height:23px;border:1px solid #cbdaea;border-radius:2px;background:linear-gradient(#eef3f9,#e6edf6)"></div><div class="a" style="left:257px;top:103px;width:22px;height:21px;background:rgba(255,255,255,0.45)"></div><div class="a" style="left:280px;top:103px;width:1px;height:21px;background:rgba(0,0,0,0.06)"></div><div class="a" style="left:281px;top:103px;width:1px;height:21px;background:rgba(255,255,255,0.6)"></div><div class="mi" style="top:61px">转换为曲线(<u>V</u>)</div><div class="sc" style="left:352px;width:80.5px;text-align:right;top:61px">Ctrl+Q</div><div class="mi dis" style="top:84px">结合(<u>C</u>)</div><div class="sc dis" style="left:352px;width:80.5px;text-align:right;top:84px">Ctrl+L</div><div class="mi" style="top:107px">群组(<u>G</u>)</div><div class="sc" style="left:352px;width:80.5px;text-align:right;top:107px">Ctrl+G</div><div class="mi" style="top:130px">撤消移动(<u>U</u>)</div><div class="sc" style="left:352px;width:80.5px;text-align:right;top:130px">Ctrl+Z</div><div class="mi" style="top:153px">剪切(<u>T</u>)</div><div class="sc" style="left:352px;width:80.5px;text-align:right;top:153px">Ctrl+X</div><div class="mi" style="top:176px">复制(<u>C</u>)</div><div class="sc" style="left:352px;width:80.5px;text-align:right;top:176px">Ctrl+C</div><div class="mi" style="top:199px">删除(<u>L</u>)</div><div class="sc" style="left:352px;width:80.5px;text-align:right;top:199px">Delete</div><div class="mi" style="top:222px">锁定对象(<u>L</u>)</div><div class="mi" style="top:253px">顺序(<u>O</u>)</div><svg style="left:442px;top:256px" width="5" height="8" viewBox="0 0 5 8"><path d="M0.5 0.5 L4.5 3.75 L0.5 7 Z" fill="#222"/></svg><div class="mi" style="top:276px">样式(<u>S</u>)</div><svg style="left:442px;top:279px" width="5" height="8" viewBox="0 0 5 8"><path d="M0.5 0.5 L4.5 3.75 L0.5 7 Z" fill="#222"/></svg><div class="mi" style="top:299px">因特网链接(<u>N</u>)</div><svg style="left:442px;top:302px" width="5" height="8" viewBox="0 0 5 8"><path d="M0.5 0.5 L4.5 3.75 L0.5 7 Z" fill="#222"/></svg><div class="mi dis" style="top:330px">叠印填充(<u>F</u>)</div><div class="mi" style="top:353px">叠印轮廓(<u>O</u>)</div><div class="mi" style="top:384px">属性(<u>I</u>)</div><div class="sc" style="left:352px;width:80.5px;text-align:right;top:384px">Alt+Enter</div><div class="mi" style="top:407px">符号(<u>Y</u>)</div><svg style="left:442px;top:410px" width="5" height="8" viewBox="0 0 5 8"><path d="M0.5 0.5 L4.5 3.75 L0.5 7 Z" fill="#222"/></svg><div class="a" style="left:287px;top:244px;width:165px;height:1px;background:#e0e0e0"></div><div class="a" style="left:287px;top:245px;width:165px;height:1px;background:#fff"></div><div class="a" style="left:287px;top:321px;width:165px;height:1px;background:#e0e0e0"></div><div class="a" style="left:287px;top:322px;width:165px;height:1px;background:#fff"></div><div class="a" style="left:287px;top:374px;width:165px;height:1px;background:#e0e0e0"></div><div class="a" style="left:287px;top:375px;width:165px;height:1px;background:#fff"></div><svg style="left:260px;top:59px" width="16" height="16" viewBox="0 0 16 16"><circle cx="8" cy="8" r="5.8" fill="none" stroke="#777" stroke-width="1"/><circle cx="8" cy="2.2" r="1.8" fill="#fff" stroke="#333" stroke-width="1.1"/><circle cx="2.2" cy="8" r="1.8" fill="#fff" stroke="#333" stroke-width="1.1"/><circle cx="13.8" cy="8" r="1.8" fill="#fff" stroke="#333" stroke-width="1.1"/><circle cx="8" cy="13.8" r="1.8" fill="#fff" stroke="#333" stroke-width="1.1"/></svg><svg style="left:261px;top:83px" width="15" height="15" viewBox="0 0 15 15"><rect x="4" y="0.5" width="9" height="9" fill="#d4d4d4" stroke="#c4c4c4"/><rect x="0.5" y="4.5" width="9" height="9" fill="#c8c8c8" stroke="#bdbdbd"/></svg><svg style="left:260px;top:105px" width="16" height="16" viewBox="0 0 16 16"><rect x="0" y="0" width="2" height="2" fill="#333"/><rect x="7" y="0" width="2" height="2" fill="#333"/><rect x="14" y="0" width="2" height="2" fill="#333"/><rect x="0" y="7" width="2" height="2" fill="#333"/><rect x="14" y="7" width="2" height="2" fill="#333"/><rect x="0" y="14" width="2" height="2" fill="#333"/><rect x="7" y="14" width="2" height="2" fill="#333"/><rect x="14" y="14" width="2" height="2" fill="#333"/><rect x="3.5" y="3.5" width="5" height="4.5" fill="#fff" stroke="#333"/><rect x="6.5" y="6.5" width="5" height="5" fill="#fff" stroke="#333"/></svg><svg style="left:260px;top:127px" width="17" height="18" viewBox="0 0 17 18"><path d="M6 7 H9.5 A5 5 0 0 1 10 16.5" fill="none" stroke="#3e3e3e" stroke-width="3.4"/><path d="M0.5 7 L7 1 V13 Z" fill="#3e3e3e"/></svg><svg style="left:259px;top:151px" width="18" height="14" viewBox="0 0 18 14"><circle cx="4" cy="3.5" r="2.6" fill="none" stroke="#444" stroke-width="1.5"/><circle cx="4" cy="10.5" r="2.6" fill="none" stroke="#444" stroke-width="1.5"/><path d="M6.2 4.8 L17 11 M6.2 9.2 L17 3" stroke="#444" stroke-width="1.5"/></svg><svg style="left:261px;top:175px" width="16" height="16" viewBox="0 0 16 16"><rect x="0.5" y="0.5" width="8" height="10" fill="#dde8f2" stroke="#9ab"/><path d="M2 3 H7 M2 5 H7 M2 7 H7" stroke="#9ab"/><rect x="4.5" y="4.5" width="9" height="10" fill="#fff" stroke="#555"/><path d="M6.5 7.5 H11.5 M6.5 9.5 H11.5 M6.5 11.5 H11.5" stroke="#555"/></svg><svg style="left:261px;top:198px" width="14" height="15" viewBox="0 0 14 15"><path d="M1 2.5 H13 M5 2.5 V0.5 H9 V2.5" fill="none" stroke="#555" stroke-width="1.2"/><path d="M2.5 3 L3 14.5 H11 L11.5 3" fill="none" stroke="#555" stroke-width="1.2"/><path d="M5.5 5 V12.5 M8.5 5 V12.5" stroke="#555"/></svg><svg style="left:262px;top:222px" width="12" height="13" viewBox="0 0 12 13"><path d="M3 6 V4 A3 3 0 0 1 9 4 V6" fill="none" stroke="#3c3c5c" stroke-width="1.5"/><rect x="0.5" y="5.5" width="11" height="7.5" rx="1" fill="#4a4a72"/><rect x="5" y="8" width="2" height="3" fill="#aab"/></svg><div class="a" style="left:457px;top:106px;width:84px;height:20px;background:rgba(0,0,0,0.3);filter:blur(1px)"></div><div class="a" style="left:454px;top:103px;width:85px;height:21px;border:1px solid #e6e6e6;border-left:none;border-radius:0 2px 2px 0;background:#fdfdfd"></div><div class="pt" style="left:459px;top:106px;color:#dedede;font-weight:500">群组 (Ctrl+G)</div></body></html>
